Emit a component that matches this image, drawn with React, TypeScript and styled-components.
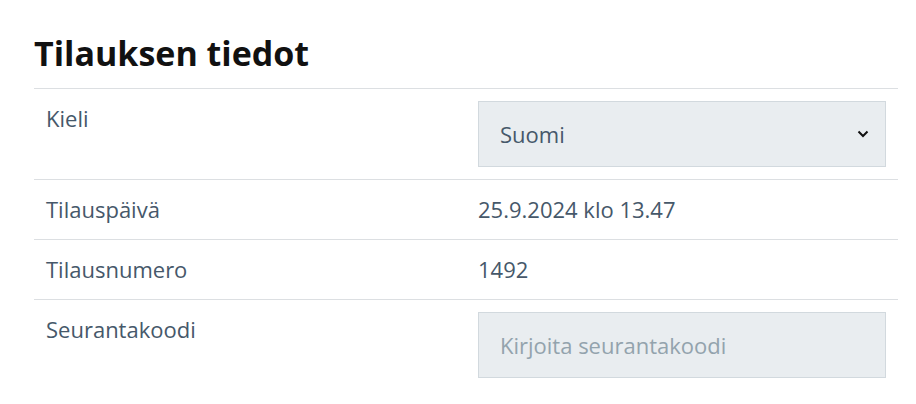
import React, { useState } from 'react';
import styled, { createGlobalStyle } from 'styled-components';

const GlobalStyle = createGlobalStyle`
  body {
    margin: 0;
    background: #fff;
    font-family: 'Open Sans', 'Noto Sans', sans-serif;
  }
`;

const Wrap = styled.section`
  padding: 30px 18px 0 34px;
`;

const Title = styled.h2`
  margin: 0 0 12px;
  font-size: 34px;
  line-height: 46px;
  font-weight: 700;
  color: #111;
`;

const Table = styled.div`
  border-top: 1px solid #dcdfe2;
`;

const Row = styled.div`
  display: grid;
  grid-template-columns: 1fr 1fr;
  border-bottom: 1px solid #dcdfe2;
  &:last-child {
    border-bottom: none;
  }
`;

const Cell = styled.div`
  padding: 12px;
  font-size: 22px;
  line-height: 35px;
  color: #46586a;
`;

const SelectWrap = styled.div`
  position: relative;
`;

const Select = styled.select`
  appearance: none;
  width: 100%;
  height: 66px;
  box-sizing: border-box;
  padding: 0 40px 0 21px;
  background: #e9edf0;
  border: 1px solid #d2d9de;
  border-radius: 0;
  font: inherit;
  color: #46586a;
`;

const Chevron = styled.svg`
  position: absolute;
  right: 17px;
  top: 29px;
  pointer-events: none;
`;

const Input = styled.input`
  width: 100%;
  height: 66px;
  box-sizing: border-box;
  padding: 0 21px;
  background: #e9edf0;
  border: 1px solid #d2d9de;
  border-radius: 0;
  font: inherit;
  color: #46586a;
  &::placeholder {
    color: #93a3ad;
  }
`;

export default function App() {
  const [lang, setLang] = useState('fi');
  const [code, setCode] = useState('');

  return (
    <>
      <GlobalStyle />
      <Wrap>
        <Title>Tilauksen tiedot</Title>
        <Table>
          <Row>
            <Cell>Kieli</Cell>
            <Cell>
              <SelectWrap>
                <Select value={lang} onChange={(e) => setLang(e.target.value)}>
                  <option value="fi">Suomi</option>
                  <option value="sv">Svenska</option>
                  <option value="en">English</option>
                </Select>
                <Chevron width="12" height="8" viewBox="0 0 12 8">
                  <path d="M1.5 1.5l4.5 4.5 4.5-4.5" fill="none" stroke="#111" strokeWidth="2" />
                </Chevron>
              </SelectWrap>
            </Cell>
          </Row>
          <Row>
            <Cell>Tilauspäivä</Cell>
            <Cell>25.9.2024 klo 13.47</Cell>
          </Row>
          <Row>
            <Cell>Tilausnumero</Cell>
            <Cell>1492</Cell>
          </Row>
          <Row>
            <Cell>Seurantakoodi</Cell>
            <Cell>
              <Input
                value={code}
                onChange={(e) => setCode(e.target.value)}
                placeholder="Kirjoita seurantakoodi"
              />
            </Cell>
          </Row>
        </Table>
      </Wrap>
    </>
  );
}
